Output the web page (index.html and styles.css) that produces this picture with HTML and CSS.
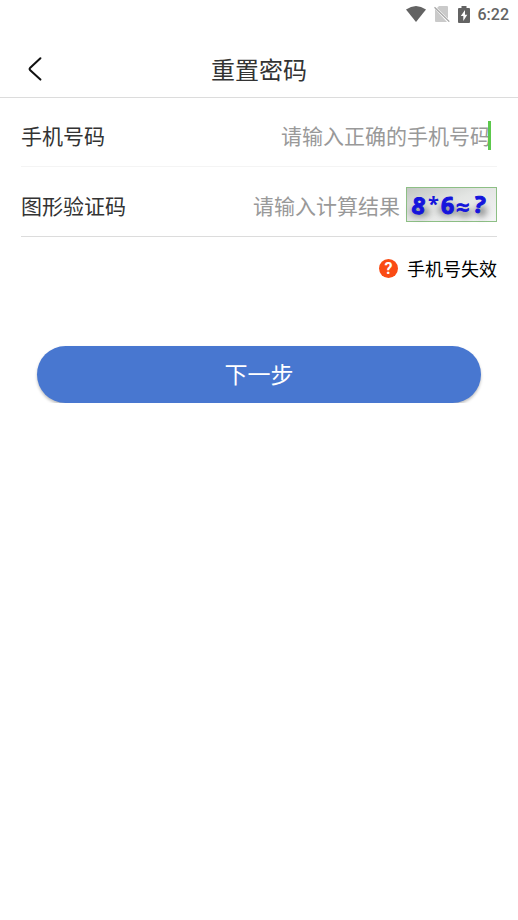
FILE: index.html
```html
<!DOCTYPE html>
<html lang="zh-CN">
<head>
<meta charset="utf-8">
<meta name="viewport" content="width=device-width, initial-scale=1">
<title>重置密码</title>
<link rel="stylesheet" href="styles.css">
</head>
<body>
<div class="status">
  <svg width="20" height="16" viewBox="0 0 20 16" aria-hidden="true"><path d="M0 3.5Q10-3.5 20 3.5L10 16Z" fill="#636363"/></svg>
  <svg width="16" height="16" viewBox="0 0 16 16" aria-hidden="true"><path d="M5 0H13Q14 0 14 1V12.8L3 2ZM1 3L13 16H2Q1 16 1 15Z" fill="#cacaca"/><path d="M.5 1.2L15.3 15.6" stroke="#a6a6a6" stroke-width="1.3"/></svg>
  <svg width="12" height="17" viewBox="0 0 12 17" aria-hidden="true"><path d="M3.5 0H8.5V2H11Q12 2 12 3V16Q12 17 11 17H1Q0 17 0 16V3Q0 2 1 2H3.5Z" fill="#636363"/><path d="M7 4L2.8 10H5.3V15L9.3 8.7H7Z" fill="#fff"/></svg>
  <span class="time">6:22</span>
</div>
<header class="header">
  <button class="back" type="button" aria-label="返回">
    <svg width="14" height="24" viewBox="0 0 14 24" aria-hidden="true"><path d="M12.4 1.2L2 11Q1.2 12 2 13L12.4 22.6" fill="none" stroke="#111" stroke-width="2" stroke-linecap="round"/></svg>
  </button>
  <h1 class="title">重置密码</h1>
</header>
<form class="form">
  <div class="row">
    <label class="label" for="phone">手机号码</label>
    <div class="field phone-field">
      <input class="input" id="phone" type="tel" placeholder="请输入正确的手机号码">
      <span class="caret"></span>
    </div>
  </div>
  <div class="row row-last">
    <label class="label" for="code">图形验证码</label>
    <div class="field">
      <input class="input" id="code" type="text" placeholder="请输入计算结果">
    </div>
    <svg class="captcha" width="91" height="35" viewBox="0 0 91 35" role="img" aria-label="验证码">
      <defs>
        <linearGradient id="paper" x1="0" y1="0" x2="1" y2="1"><stop offset="0" stop-color="#c2c6c2"/><stop offset=".45" stop-color="#e3e5e3"/><stop offset="1" stop-color="#f4f4f6"/></linearGradient>
        <filter id="soft" x="-30%" y="-50%" width="160%" height="200%"><feGaussianBlur stdDeviation="3"/></filter>
      </defs>
      <rect x=".5" y=".5" width="90" height="34" fill="url(#paper)" stroke="#8dbf85"/>
      <g fill="#555" opacity=".55" filter="url(#soft)"><ellipse cx="14" cy="25" rx="10" ry="5"/><ellipse cx="42" cy="23" rx="10" ry="6"/><ellipse cx="59" cy="26" rx="8" ry="4"/><ellipse cx="75" cy="24" rx="6" ry="6"/></g>
      <g class="captcha-text">
        <text x="6" y="27" transform="rotate(10 13 19)">8</text>
        <text class="captcha-star" x="22" y="24">*</text>
        <text x="35" y="27">6</text>
        <text class="captcha-equals" x="50" y="29">≈</text>
        <text x="68" y="26" transform="rotate(10 74 18)">?</text>
      </g>
    </svg>
  </div>
  <a class="help" href="#invalid"><span class="badge">?</span>手机号失效</a>
  <button class="next" type="button">下一步</button>
</form>
</body>
</html>
```
FILE: styles.css
```css
* {
  box-sizing: border-box;
}

body {
  margin: 0;
  background: #fff;
  color: #333;
  font-family: "Noto Sans CJK SC", sans-serif;
}

.status {
  display: flex;
  align-items: center;
  justify-content: flex-end;
  height: 28px;
  padding: 0 9px;
}

.status svg + svg {
  margin-left: 8px;
}

.time {
  margin-left: 8px;
  padding-top: 2px;
  color: #636363;
  font: 500 16px/20px Roboto, sans-serif;
}

.header {
  display: grid;
  grid-template-columns: 70px 1fr 70px;
  align-items: center;
  height: 70px;
  padding-top: 13px;
  border-bottom: 1px solid #dcdcdc;
}

.back {
  display: flex;
  align-items: center;
  justify-content: center;
  height: 48px;
  padding: 0;
  border: 0;
  background: none;
}

.title {
  margin: 0;
  font-size: 24px;
  font-weight: 400;
  line-height: 36px;
  text-align: center;
}

.form {
  display: flex;
  flex-direction: column;
  padding: 0 21px;
}

.row {
  display: flex;
  align-items: center;
  height: 69px;
  padding-top: 6px;
  border-bottom: 1px solid #f4f4f4;
  font-size: 21px;
  line-height: 30px;
}

.row-last {
  height: 70px;
  border-bottom-color: #dcdcdc;
}

.label {
  flex: none;
}

.field {
  position: relative;
  flex: 1;
  min-width: 0;
}

.phone-field {
  margin-right: 6px;
}

.input {
  display: block;
  width: 100%;
  height: 30px;
  padding: 0;
  border: 0;
  outline: 0;
  background: none;
  color: #333;
  font: inherit;
  text-align: right;
}

.input::placeholder {
  color: #999;
  opacity: 1;
}

.caret {
  position: absolute;
  top: 1px;
  right: 0;
  width: 3px;
  height: 29px;
  background: #5cc84c;
}

.captcha {
  flex: none;
  margin-left: 6px;
  overflow: visible;
}

.captcha-text {
  fill: #1414dc;
  stroke: #1414dc;
  stroke-width: 1px;
  stroke-linejoin: round;
  font: 700 23px "Open Sans", sans-serif;
}

.captcha-star {
  stroke-width: 0;
  font-size: 20px;
}

.captcha-equals {
  font-size: 24px;
  font-weight: 400;
}

.help {
  display: flex;
  align-items: center;
  align-self: flex-end;
  gap: 9px;
  margin-top: 17px;
  color: #000;
  font-size: 18px;
  line-height: 28px;
  text-decoration: none;
}

.badge {
  width: 19px;
  height: 19px;
  border-radius: 50%;
  background: #fa4b14;
  color: #fff;
  font: 700 16px/19px Roboto, sans-serif;
  text-align: center;
}

.next {
  height: 57px;
  margin: 64px 16px 0;
  padding: 0 0 4px;
  border: 0;
  border-radius: 29px;
  background: #4877d0;
  box-shadow: 0 2px 3px rgba(0, 0, 0, 0.25);
  color: #fff;
  font: 400 23px/34px "Noto Sans CJK SC", sans-serif;
}
```
